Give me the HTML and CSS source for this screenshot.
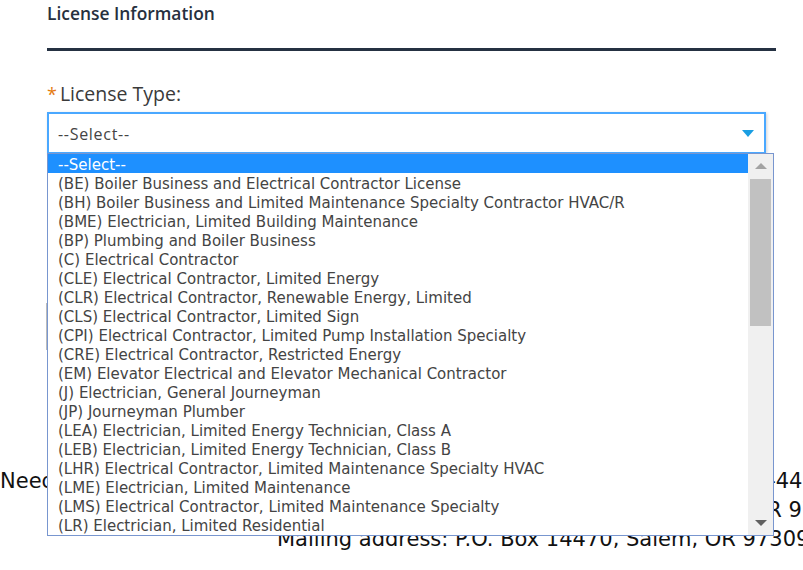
FILE: index.html
```html
<!DOCTYPE html>
<html lang="en">
<head>
  <meta charset="UTF-8" />
  <meta name="viewport" content="width=device-width, initial-scale=1.0"/>
  <title>License Information</title>
  <link rel="stylesheet" href="styles.css">
</head>
<body>
  <div class="form">
    <h3 class="section-title">License Information</h3>

    <div class="field">
      <label class="field-label" for="licenseType"><span class="req">*</span>License Type:</label>
      <div class="select-wrap">
        <div class="select-box" id="licenseType">
          <span>--Select--</span>
          <span class="caret"></span>
        </div>

        <div class="options">
          <ul class="option-list">
            <li class="active">--Select--</li>
            <li>(BE) Boiler Business and Electrical Contractor License</li>
            <li>(BH) Boiler Business and Limited Maintenance Specialty Contractor HVAC/R</li>
            <li>(BME) Electrician, Limited Building Maintenance</li>
            <li>(BP) Plumbing and Boiler Business</li>
            <li>(C) Electrical Contractor</li>
            <li>(CLE) Electrical Contractor, Limited Energy</li>
            <li>(CLR) Electrical Contractor, Renewable Energy, Limited</li>
            <li>(CLS) Electrical Contractor, Limited Sign</li>
            <li>(CPI) Electrical Contractor, Limited Pump Installation Specialty</li>
            <li>(CRE) Electrical Contractor, Restricted Energy</li>
            <li>(EM) Elevator Electrical and Elevator Mechanical Contractor</li>
            <li>(J) Electrician, General Journeyman</li>
            <li>(JP) Journeyman Plumber</li>
            <li>(LEA) Electrician, Limited Energy Technician, Class A</li>
            <li>(LEB) Electrician, Limited Energy Technician, Class B</li>
            <li>(LHR) Electrical Contractor, Limited Maintenance Specialty HVAC</li>
            <li>(LME) Electrician, Limited Maintenance</li>
            <li>(LMS) Electrical Contractor, Limited Maintenance Specialty</li>
            <li>(LR) Electrician, Limited Residential</li>
          </ul>
          <div class="scrollbar">
            <span class="arrow up"></span>
            <span class="thumb"></span>
            <span class="arrow down"></span>
          </div>
        </div>
      </div>
    </div>

    <div class="panel"></div>
  </div>

  <div class="footer">
    <p class="footer-line help">Need help? Phone the Building Codes Division at 503-378-4133 or 1-800-442-7457</p>
    <p class="footer-line street">Street address: 1535 Edgewater St. NW, Salem, OR 97304</p>
    <p class="footer-line mailing">Mailing address: P.O. Box 14470, Salem, OR 97309</p>
  </div>
</body>
</html>
```

FILE: styles.css
```css
* { box-sizing: border-box; }
body {
  margin: 0;
  background: #fff;
  color: #333;
  font-family: "Open Sans", sans-serif;
  overflow: hidden;
}
.form {
  width: 776px;
  padding-left: 47px;
}
.section-title {
  margin: 0;
  padding: 1px 0 0;
  height: 51px;
  font-size: 17.4px;
  font-weight: 600;
  color: #26303e;
  border-bottom: 3px solid #253142;
}
.field {
  margin-top: 30px;
}
.field-label {
  display: block;
  font-size: 19.5px;
  color: #3a3a3a;
  line-height: 26px;
  margin-bottom: 5px;
}
.req {
  color: #e47b10;
  font-size: 18px;
  margin-right: 3px;
}
.select-wrap {
  position: relative;
  width: 719px;
}
.select-box {
  height: 42px;
  border: 2px solid #4aa8ff;
  box-shadow: 1px 1px 3px rgba(0, 0, 0, 0.18);
  display: flex;
  align-items: center;
  justify-content: space-between;
  padding: 1px 10px 0 9px;
  font-size: 16px;
  letter-spacing: 0.7px;
  color: #444;
}
.caret {
  width: 0;
  height: 0;
  border-left: 6px solid transparent;
  border-right: 6px solid transparent;
  border-top: 7px solid #1a9ee2;
}

/* open dropdown list */
.options {
  position: absolute;
  top: 41px;
  left: 0;
  width: 727px;
  height: 383px;
  background: #fff;
  border: 1px solid #7896cf;
  display: flex;
  z-index: 2;
}
.option-list {
  flex: 1;
  list-style: none;
  margin: 0;
  padding: 0;
  font-family: "DejaVu Sans", Verdana, sans-serif;
  font-size: 15px;
  color: #444;
}
.option-list li {
  height: 19px;
  padding: 2px 0 0 10px;
  line-height: 19px;
  white-space: nowrap;
}
.option-list li.active {
  background: #1e90ff;
  color: #fff;
}
.scrollbar {
  width: 25px;
  background: #f0f0f0;
  display: flex;
  flex-direction: column;
  align-items: center;
}
.thumb {
  width: 21px;
  height: 147px;
  background: #c1c1c1;
}
.arrow {
  width: 0;
  height: 0;
  border-left: 6px solid transparent;
  border-right: 6px solid transparent;
}
.arrow.up {
  border-bottom: 6px solid #a3a3a3;
  margin: 9px 0 10px;
}
.arrow.down {
  border-top: 6px solid #606060;
  margin-top: auto;
  margin-bottom: 9px;
}
.panel {
  margin: 149px 0 0 -1px;
  height: 47px;
  width: 200px;
  border: 1px solid #bbb;
}

.footer {
  margin-top: 117px;
  font-family: "DejaVu Sans", Verdana, sans-serif;
  font-size: 21px;
  color: #111;
  white-space: nowrap;
}
.footer-line {
  margin: 0;
  line-height: 29px;
}
.help {
  word-spacing: 0.5px;
}
.street {
  padding-left: 241px;
}
.mailing {
  padding-left: 277px;
}
```
